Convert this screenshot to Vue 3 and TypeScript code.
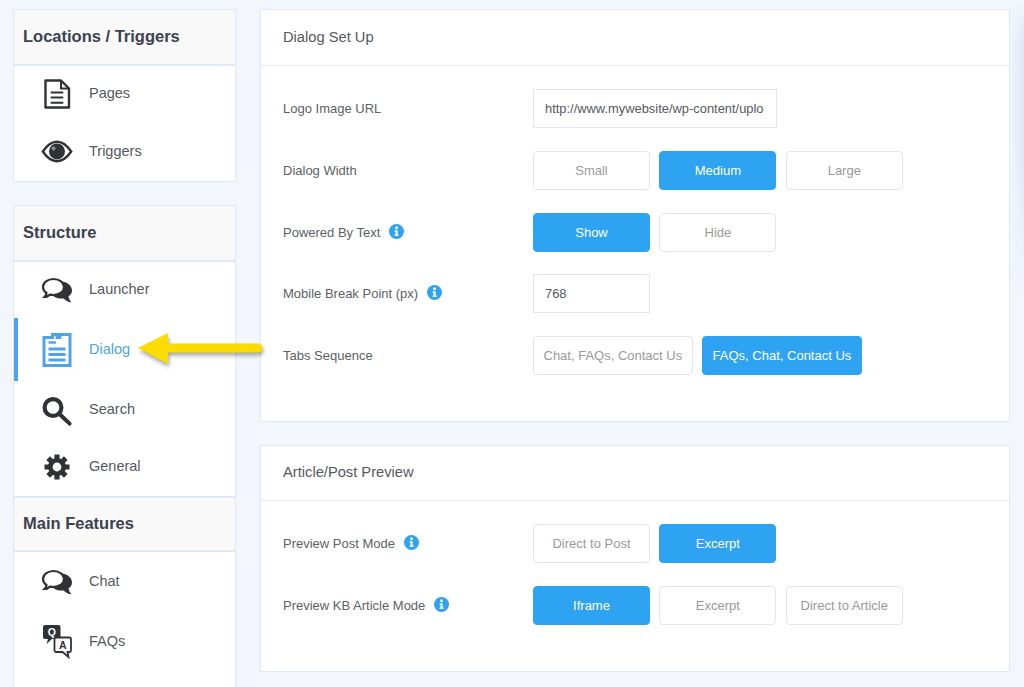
<script setup lang="ts">
interface NavItem {
  label: string
  icon: string
  active?: boolean
}

interface NavGroup {
  title: string
  gap: number
  items: NavItem[]
}

interface Field {
  label: string
  info?: boolean
  input?: string
  inputWide?: boolean
  wide?: boolean
  options?: { text: string; on?: boolean }[]
}

const navCards: NavGroup[][] = [
  [
    {
      title: 'Locations / Triggers',
      gap: 1,
      items: [
        { label: 'Pages', icon: 'page' },
        { label: 'Triggers', icon: 'eye' }
      ]
    }
  ],
  [
    {
      title: 'Structure',
      gap: 0,
      items: [
        { label: 'Launcher', icon: 'chat' },
        { label: 'Dialog', icon: 'dialog', active: true },
        { label: 'Search', icon: 'search' },
        { label: 'General', icon: 'gear' }
      ]
    },
    {
      title: 'Main Features',
      gap: 3,
      items: [
        { label: 'Chat', icon: 'chat' },
        { label: 'FAQs', icon: 'faq' }
      ]
    }
  ]
]

const panels: { title: string; fields: Field[] }[] = [
  {
    title: 'Dialog Set Up',
    fields: [
      { label: 'Logo Image URL', input: 'http://www.mywebsite/wp-content/uplo', inputWide: true },
      {
        label: 'Dialog Width',
        options: [{ text: 'Small' }, { text: 'Medium', on: true }, { text: 'Large' }]
      },
      {
        label: 'Powered By Text',
        info: true,
        options: [{ text: 'Show', on: true }, { text: 'Hide' }]
      },
      { label: 'Mobile Break Point (px)', info: true, input: '768' },
      {
        label: 'Tabs Sequence',
        wide: true,
        options: [{ text: 'Chat, FAQs, Contact Us' }, { text: 'FAQs, Chat, Contact Us', on: true }]
      }
    ]
  },
  {
    title: 'Article/Post Preview',
    fields: [
      {
        label: 'Preview Post Mode',
        info: true,
        options: [{ text: 'Direct to Post' }, { text: 'Excerpt', on: true }]
      },
      {
        label: 'Preview KB Article Mode',
        info: true,
        options: [{ text: 'Iframe', on: true }, { text: 'Excerpt' }, { text: 'Direct to Article' }]
      }
    ]
  }
]
</script>

<template>
  <div class="page">
    <aside class="sidebar">
      <section v-for="(card, c) in navCards" :key="c" class="side-card">
        <div v-for="group in card" :key="group.title" class="side-group">
          <h2 class="side-title">{{ group.title }}</h2>
          <ul class="side-list" :style="{ gap: group.gap + 'px' }">
            <li
              v-for="item in group.items"
              :key="item.label"
              class="side-item"
              :class="{ active: item.active }"
            >
              <svg class="side-icon" viewBox="0 0 32 36" width="32" height="36">
                <g v-if="item.icon === 'page'" fill="none" stroke="#303236">
                  <path d="M4.5 5.5H20L28 13.5V32.5H4.5Z" stroke-width="2.4" stroke-linejoin="round" />
                  <path d="M20 5.5V13.5H28" stroke-width="2" />
                  <path d="M9.7 17.5H22.3M9.7 22.6H22.3M9.7 27.7H22.3" stroke-width="2" />
                </g>
                <g v-else-if="item.icon === 'eye'">
                  <path
                    d="M1.8 18.5C7 11 12 8.8 16 8.8S25 11 30.2 18.5C25 26 20 28.2 16 28.2S7 26 1.8 18.5Z"
                    fill="none"
                    stroke="#303236"
                    stroke-width="2.4"
                  />
                  <circle cx="16" cy="18.4" r="8" fill="#303236" />
                  <circle cx="12.6" cy="15.4" r="2" fill="#8b8d91" />
                </g>
                <g v-else-if="item.icon === 'chat'">
                  <path
                    d="M20 10.5C26 10.5 31 14.5 31 19.5C31 22 29.5 24.2 27.5 25.5C28 27.8 29 29.8 30.5 31.2C27 31 24.2 29.2 22.6 27.4C19 28 15.5 27.2 12.5 25.2Z"
                    fill="#303236"
                  />
                  <path
                    d="M12.5 8C18.5 8 23 11.5 23 16C23 20.5 18.5 24 12.5 24C11 24 10 23.8 9 23.6C7.5 25 5.5 26 3.5 26C4.5 25 5.5 23.5 5.5 22C3.3 20.5 2 18.3 2 16C2 11.5 6.5 8 12.5 8Z"
                    fill="#fff"
                    stroke="#303236"
                    stroke-width="2.2"
                  />
                </g>
                <g v-else-if="item.icon === 'dialog'" fill="none" stroke="#4ea3ea">
                  <path d="M3 6.5H11.5V3.4H16V6.5H19V3.4H29V34.4H3Z" stroke-width="3" />
                  <path d="M7.5 11.5H15" stroke-width="2.4" />
                  <path d="M7.5 18H24.5M7.5 23.5H24.5M7.5 29H24.5" stroke-width="3" />
                </g>
                <g v-else-if="item.icon === 'search'" fill="none" stroke="#303236" stroke-linecap="round">
                  <circle cx="12" cy="16.5" r="8.4" stroke-width="4.2" />
                  <path d="M19.5 24L28.6 32.6" stroke-width="4" />
                </g>
                <g v-else-if="item.icon === 'gear'" stroke="#303236" fill="#303236">
                  <path
                    d="M16 6.5V31.5M3.5 19H28.5M7.2 10.2L24.8 27.8M24.8 10.2L7.2 27.8"
                    stroke-width="5.2"
                  />
                  <circle cx="16" cy="19" r="9" stroke="none" />
                  <circle cx="16" cy="19" r="4.4" fill="#fff" stroke="none" />
                </g>
                <g v-else-if="item.icon === 'faq'">
                  <path
                    d="M4 2H17.5C18.6 2 19.5 2.9 19.5 4V14C19.5 15.1 18.6 16 17.5 16H11L5.5 21L7 16H4C2.9 16 2 15.1 2 14V4C2 2.9 2.9 2 4 2Z"
                    fill="#303236"
                  />
                  <text x="10.8" y="12.8" class="faq-q">Q</text>
                  <path
                    d="M15 14.5H28.5C29.3 14.5 30 15.2 30 16V27.5C30 28.3 29.3 29 28.5 29H26.5L27.5 34L21.5 29H15C14.2 29 13.5 28.3 13.5 27.5V16C13.5 15.2 14.2 14.5 15 14.5Z"
                    fill="#fff"
                    stroke="#303236"
                    stroke-width="1.8"
                  />
                  <text x="21.8" y="26" class="faq-a">A</text>
                </g>
              </svg>
              <span>{{ item.label }}</span>
            </li>
          </ul>
        </div>
      </section>
    </aside>

    <main class="content">
      <section v-for="panel in panels" :key="panel.title" class="panel">
        <h2 class="panel-title">{{ panel.title }}</h2>
        <div class="panel-body">
          <div v-for="field in panel.fields" :key="field.label" class="field">
            <label class="field-label">
              {{ field.label }}
              <svg v-if="field.info" class="info" viewBox="0 0 16 16" width="15" height="15">
                <circle cx="8" cy="8" r="8" fill="#2ea3f2" />
                <circle cx="8" cy="4" r="1.6" fill="#fff" />
                <path d="M6 6.6H9.2V11.2H10.2V12.8H6V11.2H7V8.2H6Z" fill="#fff" />
              </svg>
            </label>
            <input
              v-if="field.input"
              class="text-input"
              :class="{ long: field.inputWide }"
              type="text"
              readonly
              :value="field.input"
            />
            <div v-else class="options">
              <button
                v-for="opt in field.options"
                :key="opt.text"
                type="button"
                class="option"
                :class="{ on: opt.on, auto: field.wide }"
              >
                {{ opt.text }}
              </button>
            </div>
          </div>
        </div>
      </section>
    </main>

    <!-- callout pointing at the Dialog item -->
    <svg class="arrow" viewBox="0 0 132 40" width="132" height="40">
      <path d="M3 19L33 4V14.5H123A4.5 4.5 0 0 1 123 23.5H33V35Z" fill="#fbdc00" />
    </svg>

    <div class="edge-shade"></div>
  </div>
</template>

<style>
html,
body {
  margin: 0;
  background: #f3f6fd;
  overflow: hidden;
}
</style>

<style scoped>
.page {
  position: relative;
  display: flex;
  align-items: flex-start;
  gap: 24px;
  height: 687px;
  box-sizing: border-box;
  padding: 9px 0 0 13px;
  overflow: hidden;
  background: #f3f6fd;
  font-family: "Liberation Sans", Arial, sans-serif;
}

.sidebar {
  display: flex;
  flex-direction: column;
  gap: 23px;
  width: 223px;
  flex-shrink: 0;
}

.side-card {
  background: #fff;
  border: 1px solid #dfe8f3;
}

.side-title {
  display: flex;
  align-items: center;
  height: 53px;
  margin: 0;
  padding: 0 0 1px 9px;
  background: #f9f9f9;
  border-bottom: 2px solid #dfe8f3;
  font-size: 16.5px;
  font-weight: 700;
  color: #3c4250;
}

.side-group + .side-group .side-title {
  height: 51px;
  border-top: 2px solid #dfe8f3;
}

.side-list {
  display: flex;
  flex-direction: column;
  margin: 0;
  padding: 0;
  list-style: none;
}

/* the lower group runs on past the fold */
.side-group + .side-group .side-list {
  padding: 2px 0 60px;
}

.side-item {
  position: relative;
  display: flex;
  align-items: center;
  gap: 16px;
  box-sizing: border-box;
  height: 57px;
  padding: 0 0 4px 27px;
  font-size: 14.5px;
  color: #55585e;
}

.side-item.active {
  height: 63px;
  color: #4ea3ea;
}

.side-item.active::before {
  content: "";
  position: absolute;
  left: 0;
  top: -1px;
  bottom: 1px;
  width: 4px;
  background: #4ea3ea;
}

.side-icon {
  flex-shrink: 0;
}

.faq-q,
.faq-a {
  font-size: 10.5px;
  font-weight: 700;
  text-anchor: middle;
}

.faq-q {
  fill: #fff;
}

.faq-a {
  fill: #303236;
}

.content {
  display: flex;
  flex-direction: column;
  gap: 23px;
  width: 750px;
  flex-shrink: 0;
}

.panel {
  background: #fff;
  border: 1px solid #dfe8f3;
}

.panel-title {
  display: flex;
  align-items: center;
  height: 53px;
  margin: 0;
  padding: 0 0 2px 22px;
  border-bottom: 1px solid #e4ebf4;
  font-size: 14.7px;
  font-weight: 400;
  color: #55585e;
}

.panel + .panel .panel-title {
  height: 52px;
}

.panel-body {
  display: flex;
  flex-direction: column;
  gap: 22.75px;
  padding: 23px 0 46px 22px;
}

.field {
  display: flex;
  align-items: center;
  height: 39px;
}

.field-label {
  display: flex;
  align-items: center;
  gap: 9px;
  width: 250px;
  flex-shrink: 0;
  font-size: 13px;
  color: #5c5f66;
}

.info {
  position: relative;
  top: -1px;
}

.text-input {
  box-sizing: border-box;
  width: 117px;
  height: 39px;
  padding: 0 11px;
  background: #fff;
  border: 1px solid #e2e6ea;
  outline: none;
  font-family: inherit;
  font-size: 12.9px;
  color: #55585e;
}

.text-input.long {
  width: 244px;
}

.options {
  display: flex;
  gap: 9.4px;
}

.option {
  box-sizing: border-box;
  width: 117px;
  height: 39px;
  padding: 0;
  background: #fff;
  border: 1px solid #e2e6ea;
  border-radius: 4px;
  font-family: inherit;
  font-size: 13px;
  color: #999;
}

.option.auto {
  width: auto;
  padding: 0 9.5px;
}

.option.on {
  background: #2ea3f2;
  border-color: #2ea3f2;
  color: #fff;
}

.arrow {
  position: absolute;
  left: 135px;
  top: 329px;
  filter: drop-shadow(1px 3px 2px rgba(60, 60, 40, 0.45));
}

.edge-shade {
  position: absolute;
  right: 0;
  top: 0;
  width: 14px;
  height: 300px;
  background: linear-gradient(to right, rgba(205, 210, 235, 0), rgba(205, 210, 235, 0.45));
  -webkit-mask-image: linear-gradient(to bottom, transparent 0, #000 40px, #000 150px, transparent 100%);
  mask-image: linear-gradient(to bottom, transparent 0, #000 40px, #000 150px, transparent 100%);
}
</style>
